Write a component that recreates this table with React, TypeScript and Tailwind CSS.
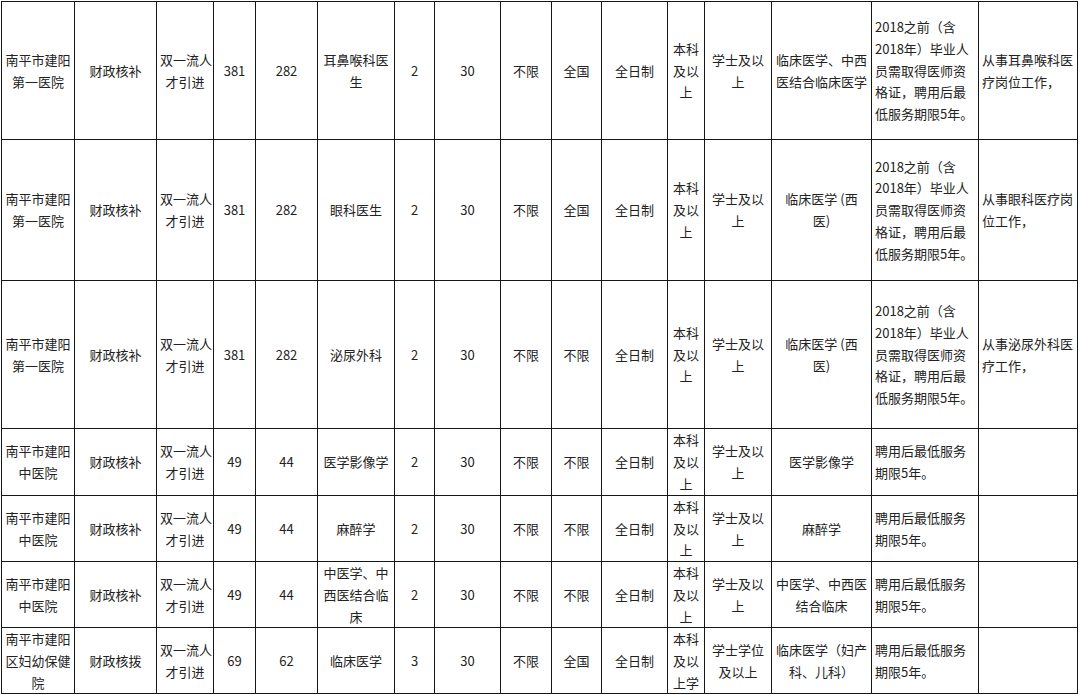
import React from 'react';

// column widths, measured from the grid lines
const COL_CLASSES = [
  'w-[73px]',
  'w-[82px]',
  'w-[57px]',
  'w-[42px]',
  'w-[62px]',
  'w-[77px]',
  'w-[40px]',
  'w-[66px]',
  'w-[51px]',
  'w-[50px]',
  'w-[66px]',
  'w-[37px]',
  'w-[67px]',
  'w-[100px]',
  'w-[107px]',
  'w-[99px]',
];

const LEFT_COLS = new Set([14, 15]);

type Row = { height: string; cells: string[] };

const QUAL_LONG = '2018之前（含\n2018年）毕业人\n员需取得医师资\n格证，聘用后最\n低服务期限5年。';
const QUAL_SHORT = '聘用后最低服务\n期限5年。';

const ROWS: Row[] = [
  {
    height: 'h-[138px]',
    cells: [
      '南平市建阳\n第一医院',
      '财政核补',
      '双一流人\n才引进',
      '381',
      '282',
      '耳鼻喉科医\n生',
      '2',
      '30',
      '不限',
      '全国',
      '全日制',
      '本科\n及以\n上',
      '学士及以\n上',
      '临床医学、中西\n医结合临床医学',
      QUAL_LONG,
      '从事耳鼻喉科医\n疗岗位工作，',
    ],
  },
  {
    height: 'h-[141px]',
    cells: [
      '南平市建阳\n第一医院',
      '财政核补',
      '双一流人\n才引进',
      '381',
      '282',
      '眼科医生',
      '2',
      '30',
      '不限',
      '全国',
      '全日制',
      '本科\n及以\n上',
      '学士及以\n上',
      '临床医学 (西\n医)',
      QUAL_LONG,
      '从事眼科医疗岗\n位工作，',
    ],
  },
  {
    height: 'h-[148px]',
    cells: [
      '南平市建阳\n第一医院',
      '财政核补',
      '双一流人\n才引进',
      '381',
      '282',
      '泌尿外科',
      '2',
      '30',
      '不限',
      '不限',
      '全日制',
      '本科\n及以\n上',
      '学士及以\n上',
      '临床医学 (西\n医)',
      QUAL_LONG,
      '从事泌尿外科医\n疗工作，',
    ],
  },
  {
    height: 'h-[67px]',
    cells: [
      '南平市建阳\n中医院',
      '财政核补',
      '双一流人\n才引进',
      '49',
      '44',
      '医学影像学',
      '2',
      '30',
      '不限',
      '不限',
      '全日制',
      '本科\n及以\n上',
      '学士及以\n上',
      '医学影像学',
      QUAL_SHORT,
      '',
    ],
  },
  {
    height: 'h-[66px]',
    cells: [
      '南平市建阳\n中医院',
      '财政核补',
      '双一流人\n才引进',
      '49',
      '44',
      '麻醉学',
      '2',
      '30',
      '不限',
      '不限',
      '全日制',
      '本科\n及以\n上',
      '学士及以\n上',
      '麻醉学',
      QUAL_SHORT,
      '',
    ],
  },
  {
    height: 'h-[66px]',
    cells: [
      '南平市建阳\n中医院',
      '财政核补',
      '双一流人\n才引进',
      '49',
      '44',
      '中医学、中\n西医结合临\n床',
      '2',
      '30',
      '不限',
      '不限',
      '全日制',
      '本科\n及以\n上',
      '学士及以\n上',
      '中医学、中西医\n结合临床',
      QUAL_SHORT,
      '',
    ],
  },
  {
    height: 'h-[66px]',
    cells: [
      '南平市建阳\n区妇幼保健\n院',
      '财政核拨',
      '双一流人\n才引进',
      '69',
      '62',
      '临床医学',
      '3',
      '30',
      '不限',
      '全国',
      '全日制',
      '本科\n及以\n上学',
      '学士学位\n及以上',
      '临床医学（妇产\n科、儿科）',
      QUAL_SHORT,
      '',
    ],
  },
];

function Cell({ text, col }: { text: string; col: number }) {
  const lines = text ? text.split('\n') : [];
  return (
    <td
      className={`border border-[#161616] px-[3px] py-0 align-middle overflow-hidden ${
        LEFT_COLS.has(col) ? 'text-left' : 'text-center'
      }`}
    >
      {lines.map((line, i) => (
        <div key={i} className="whitespace-nowrap">
          {line}
        </div>
      ))}
    </td>
  );
}

export default function App() {
  return (
    <div className="w-[1080px] h-[695px] overflow-hidden bg-white pl-px pt-px">
      <table
        className="table-fixed border-collapse w-[1077px] text-[13px] leading-[21.7px] text-[#222]"
        style={{ fontFamily: '"Noto Sans CJK SC", "Noto Sans", sans-serif' }}
      >
        <colgroup>
          {COL_CLASSES.map((c, i) => (
            <col key={i} className={c} />
          ))}
        </colgroup>
        <tbody>
          {ROWS.map((row, r) => (
            <tr key={r} className={row.height}>
              {row.cells.map((text, c) => (
                <Cell key={c} text={text} col={c} />
              ))}
            </tr>
          ))}
        </tbody>
      </table>
    </div>
  );
}
